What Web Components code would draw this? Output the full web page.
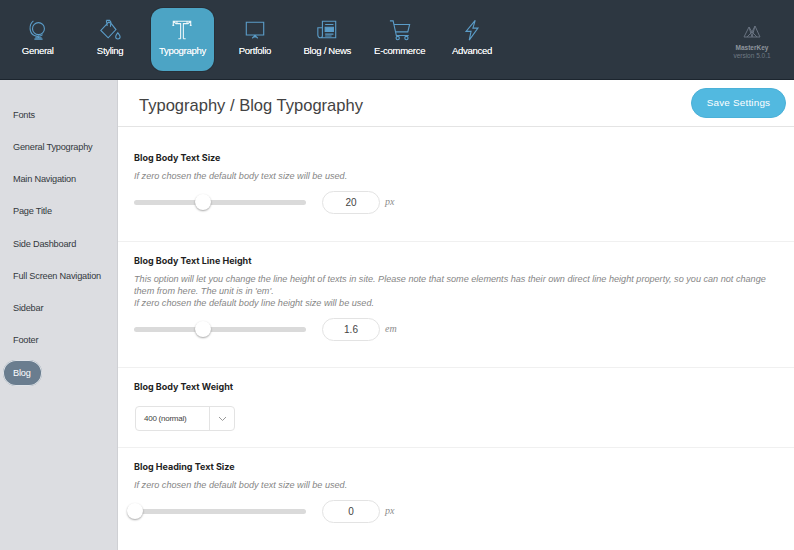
<!DOCTYPE html>
<html lang="en"><head><meta charset="utf-8"><title>Typography</title>
<style>
html,body{margin:0;padding:0;width:794px;height:550px;overflow:hidden;background:#fff;font-family:"Liberation Sans",Arial,sans-serif}
</style></head><body>
<mk-app>
  <mk-topbar slot="top">
    <mk-navitem label="General"><svg viewBox="0 0 24 24"><circle cx="12.500" cy="10.500" r="6.500"/><path d="M7 2C1.500 6.500 2.500 15.500 8 18c3 1.400 6.500 1 9-1M12.500 18v3M8 22h9M9 20.500h7"/></svg></mk-navitem>
    <mk-navitem label="Styling"><svg viewBox="0 0 24 24"><path d="M10.500 3.500 2 12.500 10 20.500 18.500 11.500 13 4.500ZM8 1.500h3.500L13 3.500 12.500 8.500M8 1.500 9 7.500"/><path d="M20.500 15c1.500 2 2.500 3 2.500 4.400a2.400 2.400 0 0 1-4.800 0c0-1.400 1-2.400 2.300-4.400Z"/></svg></mk-navitem>
    <mk-navitem label="Typography" active><svg viewBox="0 0 24 24"><path d="M2.500 7V2.500h19V7M1.500 7h2M20.500 7h2M2.500 2.500l3 2.500h5v16.500M21.500 2.500l-3 2.500h-5v16.500M10.500 21.500h-2.500M13.500 21.500h2.500M6.500 2.500v2M17.500 2.500v2"/></svg></mk-navitem>
    <mk-navitem label="Portfolio"><svg viewBox="0 0 24 24"><path d="M2.500 3.500h19v14h-19ZM12 17.500v3M9 21l3-3 3 3"/></svg></mk-navitem>
    <mk-navitem label="Blog / News"><svg viewBox="0 0 24 24"><path d="M7 18V2.500h14.500V20.500H5A3 3 0 0 1 2 17.500V9.500h5M5 20.500c1.500 0 2-1 2-2.500"/><path d="M10 6h9M10 16.500h9M10 18.500h7"/><path d="M10 9h9v4.500h-9Z" fill="#5b9dc9"/></svg></mk-navitem>
    <mk-navitem label="E-commerce"><svg viewBox="0 0 24 24"><path d="M1 2h3.500L8 18h13.500M5.500 6h17L20.500 14H7.500"/><circle cx="9.500" cy="20.800" r="1.800"/><circle cx="19" cy="20.800" r="1.800"/></svg></mk-navitem>
    <mk-navitem label="Advanced"><svg viewBox="0 0 24 24"><path d="M15.500 1.500 5.500 13.500h5.500L9 23 18.500 10h-5.500Z"/></svg></mk-navitem>
    <mk-brand></mk-brand>
  </mk-topbar>
  <mk-sidenav slot="side">
    <mk-sidelink>Fonts</mk-sidelink>
    <mk-sidelink>General Typography</mk-sidelink>
    <mk-sidelink>Main Navigation</mk-sidelink>
    <mk-sidelink>Page Title</mk-sidelink>
    <mk-sidelink>Side Dashboard</mk-sidelink>
    <mk-sidelink>Full Screen Navigation</mk-sidelink>
    <mk-sidelink>Sidebar</mk-sidelink>
    <mk-sidelink>Footer</mk-sidelink>
    <mk-sidelink active>Blog</mk-sidelink>
  </mk-sidenav>
  <mk-pagehead slot="main">Typography / Blog Typography</mk-pagehead>
  <mk-option slot="main" label="Blog Body Text Size" style="height:115px;padding-top:25px">
    <span slot="desc">If zero chosen the default body text size will be used.</span>
    <mk-range value="20" unit="px" pos="69"></mk-range>
  </mk-option>
  <mk-option slot="main" label="Blog Body Text Line Height" style="height:126px">
    <span slot="desc">This option will let you change the line height of texts in site. Please note that some elements has their own direct line height property, so you can not change<br>them from here. The unit is in 'em'.<br>If zero chosen the default body line height size will be used.</span>
    <mk-range value="1.6" unit="em" pos="69"></mk-range>
  </mk-option>
  <mk-option slot="main" label="Blog Body Text Weight" style="height:80px">
    <mk-select>400 (normal)</mk-select>
  </mk-option>
  <mk-option slot="main" label="Blog Heading Text Size" noborder>
    <span slot="desc">If zero chosen the default body text size will be used.</span>
    <mk-range value="0" unit="px" pos="1"></mk-range>
  </mk-option>
</mk-app>
<script>
function def(name, html, init){
  customElements.define(name, class extends HTMLElement{
    constructor(){super();this.attachShadow({mode:'open'}).innerHTML=html;}
    connectedCallback(){ if(init) init.call(this,this.shadowRoot); }
  });
}
def('mk-app',`<style>
:host{display:grid;grid-template:80px 470px/118px 676px;width:794px;height:550px}
.t{grid-column:1/3;display:block}
.m{min-width:0;overflow:hidden}
</style><div class="t"><slot name="top"></slot></div><slot name="side"></slot><div class="m"><slot name="main"></slot></div>`);
def('mk-topbar',`<style>
:host{display:flex;height:80px;box-sizing:border-box;background:#2d3741;border-bottom:1px solid #1c252e;padding-left:1.5px;color:#fff}
</style><slot></slot>`);
def('mk-navitem',`<style>
:host{display:block;width:72.4px;height:79px;flex:none;box-sizing:border-box;padding-top:8px}
.b{width:63px;height:63px;margin:0 auto;box-sizing:border-box;border-radius:12px;display:flex;flex-direction:column;align-items:center;padding-top:11px;gap:4px;font-size:9.6px;letter-spacing:-.33px;line-height:12px;color:#fff;white-space:nowrap;text-shadow:0 0 .5px rgba(255,255,255,.6)}
:host([active]) .b{background:#4ca4c5;box-shadow:0 0 0 1px #273039}
::slotted(svg){width:22px;height:22px;fill:none;stroke:#5b9dc9;stroke-width:1.2}
:host([active]) ::slotted(svg){stroke:#eef6f9}
</style><div class="b"><slot></slot><span id="l"></span></div>`,function(s){s.getElementById('l').textContent=this.getAttribute('label')});
def('mk-brand',`<style>
:host{display:flex;flex-direction:column;align-items:center;margin-left:auto;margin-right:17px;padding-top:24px;width:50px;font-size:6.5px;line-height:8px;color:#6f7a85}
svg{width:18px;height:14px;fill:none;stroke:#687280;stroke-width:1;margin-bottom:6px}
b{color:#8d959d}
</style><svg viewBox="0 0 18 14"><path d="M1 13 6 3l3 5 3-6 5 11M1 13h16M6 3l3 10 3-11M9 8 4 13M9 8l5 5"/></svg><b>MasterKey</b><span>version 5.0.1</span>`);
def('mk-sidenav',`<style>
:host{display:flex;flex-direction:column;box-sizing:border-box;background:#dcdde1;border-right:1px solid #cfd0d4;padding:21.7px 0 0 3px;gap:6.25px;height:470px}
</style><slot></slot>`);
def('mk-sidelink',`<style>
:host{display:flex;align-items:center;box-sizing:border-box;height:26px;padding:0 10px;font-size:9.2px;letter-spacing:-.2px;color:#33383d;white-space:nowrap;align-self:flex-start}
:host([active]){background:#6a7d8f;color:#fff;border-radius:13px;width:39px;box-shadow:0 0 0 1px #dfe3e8 inset}
</style><slot></slot>`);
def('mk-pagehead',`<style>
:host{display:flex;align-items:center;justify-content:space-between;box-sizing:border-box;height:47px;padding:0 8px 0 21px;border-bottom:1px solid #e4e4e4;font-size:16.55px;color:#434343;white-space:nowrap}
span{padding-top:5px}
button{all:unset;box-sizing:border-box;width:95px;height:30px;margin-top:-1px;border-radius:15px;background:#52b9e0;color:#fff;font:9.9px "Liberation Sans",Arial,sans-serif;letter-spacing:.2px;text-align:center;border:1px solid #4bb1d8}
</style><span><slot></slot></span><button>Save Settings</button>`);
def('mk-option',`<style>
:host{display:block;box-sizing:border-box;padding:13px 16px 0 16px;border-bottom:1px solid #f0f0f0;color:#777}
:host([noborder]){border:0}
h3{margin:0 0 6px;font:700 9px/12px Inter,"Liberation Sans",sans-serif;color:#1f1f1f}
.d{font:italic 9.12px/12px "Liberation Sans",Arial,sans-serif;color:#868686;margin-bottom:8.5px;white-space:nowrap}
</style><h3 id="l"></h3><div class="d"><slot name="desc"></slot></div><slot></slot>`,function(s){
  s.getElementById('l').textContent=this.getAttribute('label');
  if(!this.querySelector('[slot=desc]')) s.querySelector('.d').style.display='none';
});
def('mk-range',`<style>
:host{display:flex;align-items:center;height:24px}
.t{width:172px;height:5px;border-radius:3px;background:#dadada;position:relative;flex:none}
.k{position:absolute;top:-6px;width:16px;height:16px;border-radius:50%;background:#fff;box-shadow:0 1px 2px rgba(0,0,0,.35);margin-left:-8px}
.v{margin-left:16px;width:58px;height:23px;box-sizing:border-box;border:1px solid #e3e3e3;border-radius:12px;font:10px/21px "Liberation Sans",Arial,sans-serif;color:#444;text-align:center}
.u{margin-left:5px;font:italic 10px "Liberation Serif",serif;color:#8c8c8c;margin-top:-2px}
</style><div class="t"><div class="k" id="k"></div></div><div class="v" id="v"></div><div class="u" id="u"></div>`,function(s){
 s.getElementById('k').style.left=this.getAttribute('pos')+'px';
 s.getElementById('v').textContent=this.getAttribute('value');
 s.getElementById('u').textContent=this.getAttribute('unit');});
def('mk-select',`<style>
:host{display:flex;align-items:center;width:100px;height:25px;margin:13px 0 0 1px;box-sizing:border-box;border:1px solid #e3e3e3;border-radius:4px;font-size:8px;letter-spacing:-.25px;color:#444}
.x{flex:1;padding-left:8px;white-space:nowrap}
.c{width:24px;height:100%;border-left:1px solid #e3e3e3;display:flex;align-items:center;justify-content:center}
svg{width:9px;height:6px;fill:none;stroke:#999;stroke-width:1}
</style><div class="x"><slot></slot></div><div class="c"><svg viewBox="0 0 9 6"><path d="M1 1l3.500 3.500L8 1"/></svg></div>`);
</script>
</body></html>
